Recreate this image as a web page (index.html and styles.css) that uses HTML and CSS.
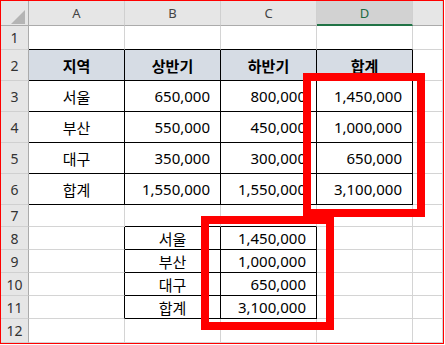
FILE: index.html
```html
<!DOCTYPE html>
<html lang="ko">
<head>
<meta charset="utf-8">
<link rel="stylesheet" href="styles.css">
</head>
<body>
<div class="frame">
  <div class="sheet">
    <!-- column headers -->
    <div class="corner"><span class="tri"></span></div>
    <div class="ch">A</div>
    <div class="ch">B</div>
    <div class="ch">C</div>
    <div class="ch sel">D</div>
    <div class="ch"></div>

    <!-- row 1 -->
    <div class="rh">1</div>
    <div class="c bB"></div>
    <div class="c bB"></div>
    <div class="c bB"></div>
    <div class="c bB"></div>
    <div class="c"></div>

    <!-- row 2 -->
    <div class="rh">2</div>
    <div class="c bR bB hd">지역</div>
    <div class="c bR bB hd">상반기</div>
    <div class="c bR bB hd">하반기</div>
    <div class="c bR bB hd">합계</div>
    <div class="c"></div>

    <!-- row 3 -->
    <div class="rh">3</div>
    <div class="c bR bB t">서울</div>
    <div class="c bR bB n">650,000</div>
    <div class="c bR bB n">800,000</div>
    <div class="c bR bB n">1,450,000</div>
    <div class="c"></div>

    <!-- row 4 -->
    <div class="rh">4</div>
    <div class="c bR bB t">부산</div>
    <div class="c bR bB n">550,000</div>
    <div class="c bR bB n">450,000</div>
    <div class="c bR bB n">1,000,000</div>
    <div class="c"></div>

    <!-- row 5 -->
    <div class="rh">5</div>
    <div class="c bR bB t">대구</div>
    <div class="c bR bB n">350,000</div>
    <div class="c bR bB n">300,000</div>
    <div class="c bR bB n">650,000</div>
    <div class="c"></div>

    <!-- row 6 -->
    <div class="rh">6</div>
    <div class="c bR bB t">합계</div>
    <div class="c bR bB n">1,550,000</div>
    <div class="c bR bB n">1,550,000</div>
    <div class="c bR bB n">3,100,000</div>
    <div class="c"></div>

    <!-- row 7 -->
    <div class="rh">7</div>
    <div class="c"></div>
    <div class="c bB"></div>
    <div class="c bB"></div>
    <div class="c"></div>
    <div class="c"></div>

    <!-- row 8 -->
    <div class="rh">8</div>
    <div class="c bR"></div>
    <div class="c bR bB t">서울</div>
    <div class="c bR bB n">1,450,000</div>
    <div class="c"></div>
    <div class="c"></div>

    <!-- row 9 -->
    <div class="rh">9</div>
    <div class="c bR"></div>
    <div class="c bR bB t">부산</div>
    <div class="c bR bB n">1,000,000</div>
    <div class="c"></div>
    <div class="c"></div>

    <!-- row 10 -->
    <div class="rh">10</div>
    <div class="c bR"></div>
    <div class="c bR bB t">대구</div>
    <div class="c bR bB n">650,000</div>
    <div class="c"></div>
    <div class="c"></div>

    <!-- row 11 -->
    <div class="rh">11</div>
    <div class="c bR"></div>
    <div class="c bR bB t">합계</div>
    <div class="c bR bB n">3,100,000</div>
    <div class="c"></div>
    <div class="c"></div>

    <!-- row 12 -->
    <div class="rh">12</div>
    <div class="c"></div>
    <div class="c"></div>
    <div class="c"></div>
    <div class="c"></div>
    <div class="c"></div>
  </div>

  <div class="mark mark-1"></div>
  <div class="mark mark-2"></div>
</div>
</body>
</html>
```

FILE: styles.css
```css
* {
  box-sizing: border-box;
}

html, body {
  margin: 0;
  padding: 0;
  background: #ffffff;
}

body {
  font-family: "Noto Sans", "Noto Sans CJK KR", sans-serif;
  color: #000;
}

.frame {
  position: relative;
  width: 444px;
  height: 344px;
  border: 1px solid #ff0000;
  overflow: hidden;
}

.sheet {
  display: grid;
  grid-template-columns: 28px 96px 96px 96px 96px 1fr;
  grid-template-rows: 25px 24px 31px 31px 31px 31px 31px 22px 23px 23px 23px 23px 1fr;
  height: 100%;
}

.corner {
  position: relative;
  background: #e6e6e6;
  border-right: 1px solid #ababab;
  border-bottom: 1px solid #ababab;
}

.tri {
  position: absolute;
  left: 10px;
  top: 9px;
  width: 14px;
  height: 14px;
  background: #b4b4b4;
  clip-path: polygon(100% 0, 100% 100%, 0 100%);
}

.ch {
  display: flex;
  align-items: center;
  justify-content: center;
  background: #e6e6e6;
  border-right: 1px solid #d0d0d0;
  border-bottom: 1px solid #ababab;
  font-size: 13px;
  color: #444;
}

.ch.sel {
  background: #d2d2d2;
  border-bottom: 2px solid #217346;
  color: #1d6a41;
}

.rh {
  display: flex;
  align-items: center;
  justify-content: center;
  background: #e6e6e6;
  border-right: 1px solid #ababab;
  border-bottom: 1px solid #d0d0d0;
  font-size: 14px;
  color: #333;
}

.c {
  display: flex;
  align-items: center;
  border-right: 1px solid #d4d4d4;
  border-bottom: 1px solid #d4d4d4;
  font-size: 15px;
  white-space: nowrap;
  overflow: hidden;
}

.bR {
  border-right-color: #000;
}

.bB {
  border-bottom-color: #000;
}

.hd {
  justify-content: center;
  background: #d6dce4;
  font-weight: 700;
}

.t {
  justify-content: center;
}

.n {
  justify-content: flex-end;
  padding-right: 10px;
}

.mark {
  position: absolute;
  border: 8px solid #ff0000;
}

.mark-1 {
  left: 302px;
  top: 72px;
  width: 122px;
  height: 144px;
}

.mark-2 {
  left: 200px;
  top: 215px;
  width: 133px;
  height: 114px;
}
```
